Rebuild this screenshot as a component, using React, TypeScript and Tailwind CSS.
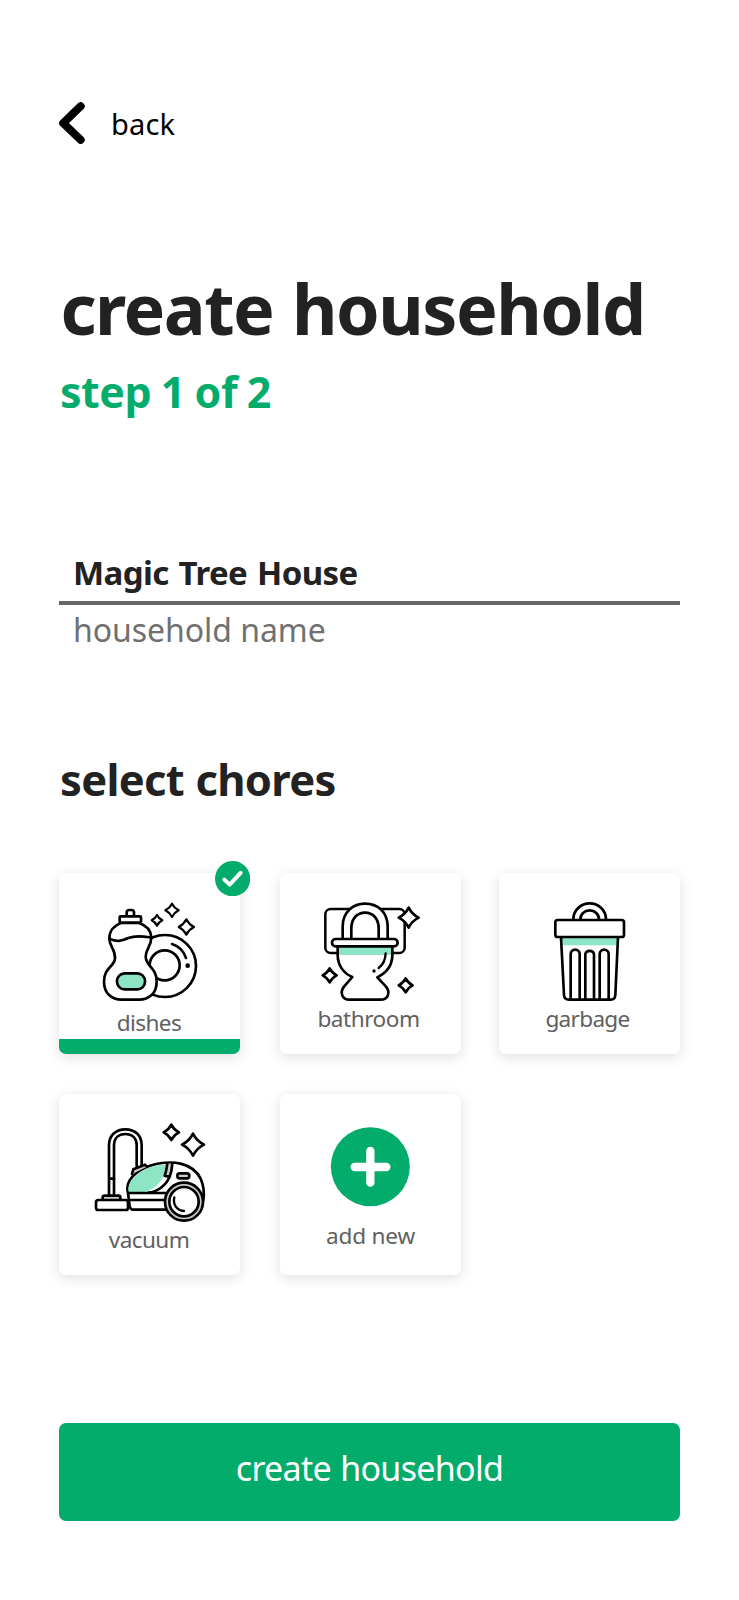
import type { ReactNode } from "react";

function Star({ x, y, r }: { x: number; y: number; r: number }) {
  const k = r * 0.33;
  return (
    <path
      fill="#fff"
      d={`M${x} ${y - r}Q${x + k} ${y - k} ${x + r} ${y}Q${x + k} ${y + k} ${x} ${y + r}Q${x - k} ${y + k} ${x - r} ${y}Q${x - k} ${y - k} ${x} ${y - r}Z`}
    />
  );
}

function Art({ viewBox, children }: { viewBox: string; children: ReactNode }) {
  return (
    <svg
      viewBox={viewBox}
      className="block h-[129px] w-[181px] shrink-0"
      fill="none"
      stroke="#000"
      strokeWidth="8"
      strokeLinecap="round"
      strokeLinejoin="round"
      aria-hidden="true"
    >
      {children}
    </svg>
  );
}

function DishesArt() {
  return (
    <Art viewBox="57 69 543 387">
      <circle cx="375" cy="348" r="93" />
      <circle cx="374" cy="346" r="45" />
      <path d="M396 282C415 288 431 303 438 324" />
      <circle cx="443" cy="347" r="7" fill="#000" stroke="none" />
      <path
        fill="#fff"
        d="M243 219C222 226 208 243 208 266C208 290 226 296 225 325C224 350 192 352 192 395C192 430 215 449 245 449H297C327 449 350 430 350 395C350 352 318 350 317 320C317 296 334 290 334 262C333 240 318 226 297 219Z"
      />
      <path d="M208 266C230 278 245 272 265 264C290 254 315 260 334 263" />
      <path fill="#fff" d="M260 198V188Q260 180 268 180H274Q282 180 282 188V198" />
      <rect x="239" y="199" width="64" height="19" rx="3" fill="#fff" />
      <rect x="231" y="370" width="84" height="48" rx="23" fill="#8de5c5" />
      <g strokeWidth="6.5">
        <Star x={396} y={181} r={20} />
        <Star x={351} y={211} r={16} />
        <Star x={439} y={231} r={23} />
      </g>
    </Art>
  );
}

function BathroomArt() {
  return (
    <Art viewBox="60 69 543 387">
      <rect x="196" y="177" width="238" height="132" rx="16" strokeWidth="7.5" />
      <path fill="#fff" d="M248 267V230C248 185 280 161 315 161C352 161 383 185 383 230V267" />
      <path d="M274 267V235C274 205 292 188 315 188C338 188 356 205 356 235V267" />
      <path
        fill="#fff"
        d="M233 289V315C233 345 250 370 277 381L252 410C238 428 247 449 268 449H362C384 449 392 428 378 410L352 382C380 368 397 345 397 315V289Z"
      />
      <path fill="#8de5c5" stroke="none" d="M237 291H393V315H237Z" />
      <rect x="216" y="267" width="197" height="22" rx="11" fill="#fff" />
      <path strokeWidth="7" d="M377 310C376 330 368 345 356 354" />
      <circle cx="342" cy="363" r="5" fill="#000" stroke="none" />
      <Star x={446} y={203} r={30} />
      <Star x={209} y={376} r={21} />
      <Star x={437} y={406} r={21} />
    </Art>
  );
}

function GarbageArt() {
  return (
    <Art viewBox="56 69 543 387">
      <path d="M279 208A49 48 0 0 1 377 208" />
      <path d="M300 208A28 27 0 0 1 356 208" />
      <path fill="#8de5c5" stroke="none" d="M244 263H411V286H244Z" />
      <path d="M242 262L251 435Q252 449 266 449H391Q404 449 405 435L413 262" />
      <rect x="225" y="210" width="206" height="51" rx="7" fill="#fff" />
      <path d="M271 449V312A13.5 13 0 0 1 298 312V449M315 449V312A13.5 13 0 0 1 341 312V449M358 449V312A13.5 13 0 0 1 385 312V449" />
    </Art>
  );
}

function VacuumArt() {
  return (
    <Art viewBox="57 41 543 387">
      <path d="M207 345V195C207 163 230 147 256 147C285 147 305 165 305 195V255" />
      <path d="M222 345V195C222 171 238 161 256 161C276 161 290 173 290 195V257" />
      <path d="M208 295H222" />
      <path fill="#ccc" d="M188 358V351Q188 346 194 346H235Q241 346 241 351V358" />
      <rect x="168" y="359" width="96" height="30" rx="7" fill="#fff" />
      <path
        fill="#fff"
        d="M264 338C253 300 290 270 330 256C400 235 460 250 482 295C492 318 494 335 490 360L385 388H282Q268 388 268 370Z"
      />
      <path fill="#ccc" d="M276 281L280 267L315 253L321 259" />
      <path fill="#8de5c5" stroke="none" d="M266 335C258 304 298 272 333 260C350 255 368 253 378 253C376 290 355 325 312 335Z" />
      <path d="M265 338H378M268 359H372" />
      <path fill="#ccc" d="M382 250C380 264 378 276 374 287L389 289C394 277 396 264 397 250" />
      <path d="M388 291C378 315 352 335 325 337" />
      <rect x="412" y="279" width="36" height="15" rx="7" fill="#ccc" />
      <circle cx="432" cy="364" r="57" fill="#ccc" />
      <circle cx="432" cy="364" r="44" fill="#fff" />
      <path d="M403 351C398 372 410 391 432 392" strokeWidth="7" />
      <Star x={394} y={156} r={23} />
      <Star x={459} y={193} r={33} />
    </Art>
  );
}

function AddArt() {
  return (
    <Art viewBox="60 41 543 387">
      <circle cx="331" cy="259" r="118.5" fill="#04ac6c" stroke="none" />
      <path d="M331 212V307M284 260H379" stroke="#fff" strokeWidth="25" />
    </Art>
  );
}

function Card({ art, label, labelClass, selected = false }: { art: ReactNode; label: string; labelClass: string; selected?: boolean }) {
  return (
    <button
      type="button"
      className="relative flex h-[181px] w-[181px] flex-col items-center rounded-[7px] bg-white shadow-[0_3px_14px_rgba(0,0,0,0.13)]"
    >
      {art}
      <span className={`text-[22.6px] leading-6 whitespace-nowrap text-[#606060] ${labelClass}`}>{label}</span>
      {selected && (
        <>
          <span className="mt-auto h-[15px] w-full rounded-b-[7px] bg-[#04ac6c]" />
          <svg viewBox="0 0 106 106" className="absolute -top-3 left-[156px] size-[35.3px]" aria-hidden="true">
            <circle cx="53" cy="53" r="53" fill="#04ac6c" />
            <path d="M28 56L44 71L77 36" fill="none" stroke="#fff" strokeWidth="12" strokeLinecap="round" strokeLinejoin="round" />
          </svg>
        </>
      )}
    </button>
  );
}

export default function App() {
  return (
    <main className="flex h-[1600px] w-[739px] flex-col bg-white px-[59px] pt-[103px] font-['Noto_Sans',sans-serif] text-[#222]">
      <button type="button" className="flex h-10 items-center self-start text-black">
        <svg viewBox="0 0 26 42" className="h-[42px] w-[26px]" fill="none" aria-hidden="true">
          <path d="M21.7 4.2L4.2 21.2L21.7 37.8" stroke="#000" strokeWidth="8" strokeLinecap="round" strokeLinejoin="round" />
        </svg>
        <span className="ml-[26px] pt-px text-[29px] leading-10 tracking-[0.2px]">back</span>
      </button>

      <h1 className="mt-[125px] pl-[1.5px] text-[70px] leading-[80px] font-bold tracking-[-1.5px] whitespace-nowrap [word-spacing:2px]">
        create household
      </h1>
      <p className="mt-4 pl-px text-[43px] leading-[56px] font-bold tracking-[-0.5px] text-[#04ac6c] [word-spacing:-1px]">step 1 of 2</p>

      <label className="mt-[130px] flex flex-col">
        <input
          defaultValue="Magic Tree House"
          className="h-[55px] border-b-4 border-[#666] px-3.5 pb-[6px] text-[33px] leading-[44px] font-bold tracking-[-0.6px] outline-none [word-spacing:2px]"
        />
        <span className="mt-[5px] pl-3.5 text-[32px] leading-10 tracking-[-0.05px] text-[#707070]">household name</span>
      </label>

      <h2 className="mt-[101px] pl-px text-[43.5px] leading-[56px] font-bold tracking-[-0.7px] [word-spacing:1px]">select chores</h2>

      <section className="mt-[66px] grid grid-cols-[221px_219px_181px] gap-y-10">
        <Card art={<DishesArt />} label="dishes" labelClass="mt-[9px] -translate-x-[0.5px] tracking-[-0.6px]" selected />
        <Card art={<BathroomArt />} label="bathroom" labelClass="mt-[5px] -translate-x-[2px] tracking-[-0.5px]" />
        <Card art={<GarbageArt />} label="garbage" labelClass="mt-[5px] -translate-x-[2px] tracking-[-0.7px]" />
        <Card art={<VacuumArt />} label="vacuum" labelClass="mt-[5px] -translate-x-[0.5px] tracking-[-0.6px]" />
        <Card art={<AddArt />} label="add new" labelClass="mt-px tracking-[-0.2px]" />
      </section>

      <button
        type="button"
        className="mt-[148px] flex h-[98px] shrink-0 items-center justify-center rounded-[7px] bg-[#04ac6c] pb-[8px] text-[34px] tracking-[-0.7px] text-white [word-spacing:1px]"
      >
        create household
      </button>
    </main>
  );
}
